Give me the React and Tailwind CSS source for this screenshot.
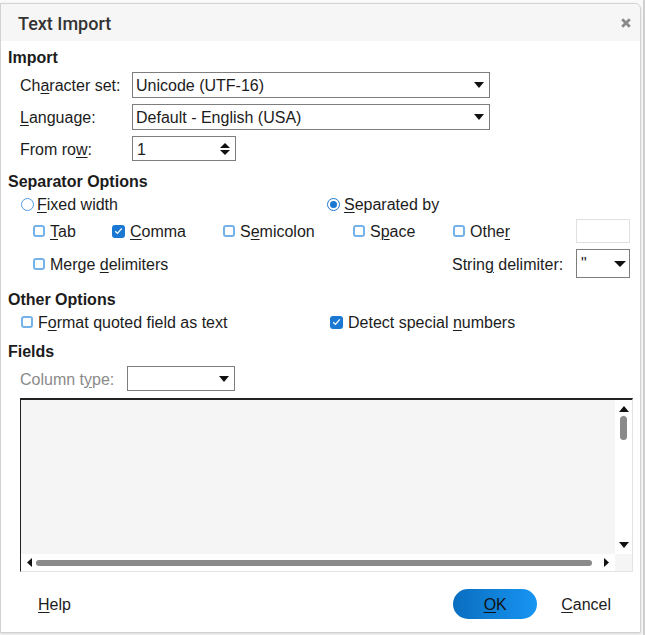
import React from 'react';

const font = "font-['Liberation_Sans',Arial,sans-serif]";

function U({ children }) {
  return <u className="underline underline-offset-[2px] decoration-1">{children}</u>;
}

function Arrow({ dir = 'down', w = 10, h = 6 }) {
  const pts = {
    down: `0,0 ${w},0 ${w / 2},${h}`,
    up: `0,${h} ${w},${h} ${w / 2},0`,
    left: `${w},0 ${w},${h} 0,${h / 2}`,
    right: `0,0 0,${h} ${w},${h / 2}`,
  }[dir];
  return (
    <svg width={w} height={h} viewBox={`0 0 ${w} ${h}`} className="shrink-0">
      <polygon points={pts} fill="#111" />
    </svg>
  );
}

function Check({ checked }) {
  if (checked) {
    return (
      <div className="w-[13px] h-[13px] rounded-[3px] bg-[#1a78d2] flex items-center justify-center shrink-0">
        <svg width="9" height="8" viewBox="0 0 9 8">
          <path d="M1.2 4.2 L3.5 6.4 L7.8 1.4" stroke="white" strokeWidth="1.3" fill="none" />
        </svg>
      </div>
    );
  }
  return <div className="w-[12px] h-[12px] rounded-[3px] border-2 border-[#74b2ea] bg-white shrink-0" />;
}

function Radio({ checked }) {
  if (checked) {
    return (
      <div className="w-[13px] h-[13px] rounded-full border-[1.5px] border-[#1a78d2] flex items-center justify-center shrink-0">
        <div className="w-[7px] h-[7px] rounded-full bg-[#1a78d2]" />
      </div>
    );
  }
  return <div className="w-[13px] h-[13px] rounded-full border-[1.5px] border-[#4f9ce2] bg-white shrink-0" />;
}

function Combo({ value, className = '' }) {
  return (
    <div className={`flex items-center justify-between border border-[#7d7d7d] bg-white pl-[3px] pr-[5px] ${className}`}>
      <span>{value}</span>
      <Arrow />
    </div>
  );
}

function CheckLabel({ checked, children, className = '' }) {
  return (
    <div className={`flex items-center gap-[5px] ${className}`}>
      <Check checked={checked} />
      <span>{children}</span>
    </div>
  );
}

export default function App() {
  return (
    <div className={`w-[645px] h-[635px] bg-[#fafafa] flex ${font} text-[16px] text-[#1c1c1c] overflow-hidden`}>
      <div className="w-[641px] h-[630px] mt-[3px] bg-white border border-[#d2d2d2] rounded-tr-[6px] shadow-[0_1px_3px_rgba(0,0,0,0.15)] flex flex-col">
        {/* Title bar */}
        <div className="h-[37px] bg-[#f6f6f6] rounded-tr-[6px] flex items-center justify-between pl-[17px] pr-[9px] shrink-0">
          <span className="font-['Roboto',sans-serif] font-medium text-[18px] text-[#333] mt-[1px]">Text Import</span>
          <svg width="10" height="10" viewBox="0 0 10 10">
            <path d="M1.2 1.2 L8.8 8.8 M8.8 1.2 L1.2 8.8" stroke="#8a8a8a" strokeWidth="2.8" />
          </svg>
        </div>

        <div className="flex flex-col pl-[7px] [&_span]:relative [&_span]:top-[1px]">
          {/* Import */}
          <div className="h-[20px] mt-[6px] flex items-center font-bold"><span>Import</span></div>
          <div className="flex items-center mt-[5px] pl-[12px]">
            <span className="w-[112px]">Ch<U>a</U>racter set:</span>
            <Combo value="Unicode (UTF-16)" className="w-[358px] h-[26px]" />
          </div>
          <div className="flex items-center mt-[6px] pl-[12px]">
            <span className="w-[112px]"><U>L</U>anguage:</span>
            <Combo value="Default - English (USA)" className="w-[358px] h-[26px]" />
          </div>
          <div className="flex items-center mt-[6px] pl-[12px]">
            <span className="w-[112px]">From ro<U>w</U>:</span>
            <div className="w-[104px] h-[25px] border border-[#7d7d7d] flex items-center justify-between pl-[4px] pr-[5px]">
              <span>1</span>
              <div className="flex flex-col gap-[2px]">
                <Arrow dir="up" w={10} h={5} />
                <Arrow dir="down" w={10} h={5} />
              </div>
            </div>
          </div>

          {/* Separator Options */}
          <div className="h-[20px] mt-[10px] flex items-center font-bold"><span>Separator Options</span></div>
          <div className="h-[20px] mt-[3px] flex items-center">
            <div className="w-[319px] pl-[13px] flex items-center gap-[3px]">
              <Radio />
              <span><U>F</U>ixed width</span>
            </div>
            <div className="flex items-center gap-[4px]">
              <Radio checked />
              <span><U>S</U>eparated by</span>
            </div>
          </div>
          <div className="h-[24px] mt-[5px] flex items-center pl-[25px]">
            <CheckLabel className="w-[79px]"><U>T</U>ab</CheckLabel>
            <CheckLabel checked className="w-[111px]"><U>C</U>omma</CheckLabel>
            <CheckLabel className="w-[130px]">S<U>e</U>micolon</CheckLabel>
            <CheckLabel className="w-[100px]">S<U>p</U>ace</CheckLabel>
            <CheckLabel className="w-[123px]">Othe<U>r</U></CheckLabel>
            <div className="w-[54px] h-[24px] border border-[#e0e0e0] bg-white" />
          </div>
          <div className="h-[29px] mt-[6px] flex items-center pl-[25px]">
            <CheckLabel className="w-[419px]">Merge <U>d</U>elimiters</CheckLabel>
            <span className="w-[124px]">Strin<U>g</U> delimiter:</span>
            <div className="w-[54px] h-[29px] border border-[#7d7d7d] flex items-center justify-between pl-[4px] pr-[3px]">
              <span className="-mt-[2px]">"</span>
              <Arrow dir="down" w={12} h={6} />
            </div>
          </div>

          {/* Other Options */}
          <div className="h-[20px] mt-[11px] flex items-center font-bold"><span>Other Options</span></div>
          <div className="h-[20px] mt-[3px] flex items-center pl-[13px]">
            <CheckLabel className="w-[309px]">F<U>o</U>rmat quoted field as text</CheckLabel>
            <CheckLabel checked>Detect special <U>n</U>umbers</CheckLabel>
          </div>

          {/* Fields */}
          <div className="h-[20px] mt-[9px] flex items-center font-bold"><span>Fields</span></div>
          <div className="flex items-center mt-[5px] pl-[12px]">
            <span className="w-[107px] text-[#8a8a8a]">Column t<U>y</U>pe:</span>
            <div className="w-[108px] h-[25px] border border-[#7d7d7d] flex items-center justify-end pr-[5px]">
              <Arrow />
            </div>
          </div>

          {/* Preview */}
          <div className="ml-[12px] mt-[7px] w-[613px] h-[174px] border-t-2 border-l border-t-[#222] border-l-[#222] border-r border-b border-r-[#e4e4e4] border-b-[#e4e4e4] flex flex-col">
            <div className="flex flex-1">
              <div className="flex-1 bg-[#f5f5f5]" />
              <div className="w-[17px] bg-white flex flex-col items-center pt-[6px] pb-[6px]">
                <Arrow dir="up" w={10} h={6} />
                <div className="w-[7px] h-[24px] rounded-full bg-[#8a8a8a] mt-[4px]" />
                <div className="flex-1" />
                <Arrow dir="down" w={10} h={6} />
              </div>
            </div>
            <div className="h-[17px] flex">
              <div className="flex-1 bg-white flex items-center pl-[6px] pr-[6px] gap-[4px]">
                <Arrow dir="left" w={5} h={9} />
                <div className="flex-1 h-[6px] rounded-full bg-[#8a8a8a]" />
                <div className="w-[4px]" />
                <Arrow dir="right" w={5} h={9} />
              </div>
              <div className="w-[17px] bg-[#f5f5f5]" />
            </div>
          </div>

          {/* Buttons */}
          <div className="h-[30px] mt-[17px] flex items-center">
            <span className="ml-[30px]"><U>H</U>elp</span>
            <div className="flex-1" />
            <div className="w-[84px] h-[30px] rounded-full bg-gradient-to-r from-[#0a6ec0] to-[#1795f2] flex items-center justify-center text-[#111]">
              <span><U>O</U>K</span>
            </div>
            <span className="ml-[24px] mr-[29px]"><U>C</U>ancel</span>
          </div>
        </div>
      </div>
      <div className="w-[2px] ml-[2px] h-full bg-[#cfcfcf]" />
    </div>
  );
}
